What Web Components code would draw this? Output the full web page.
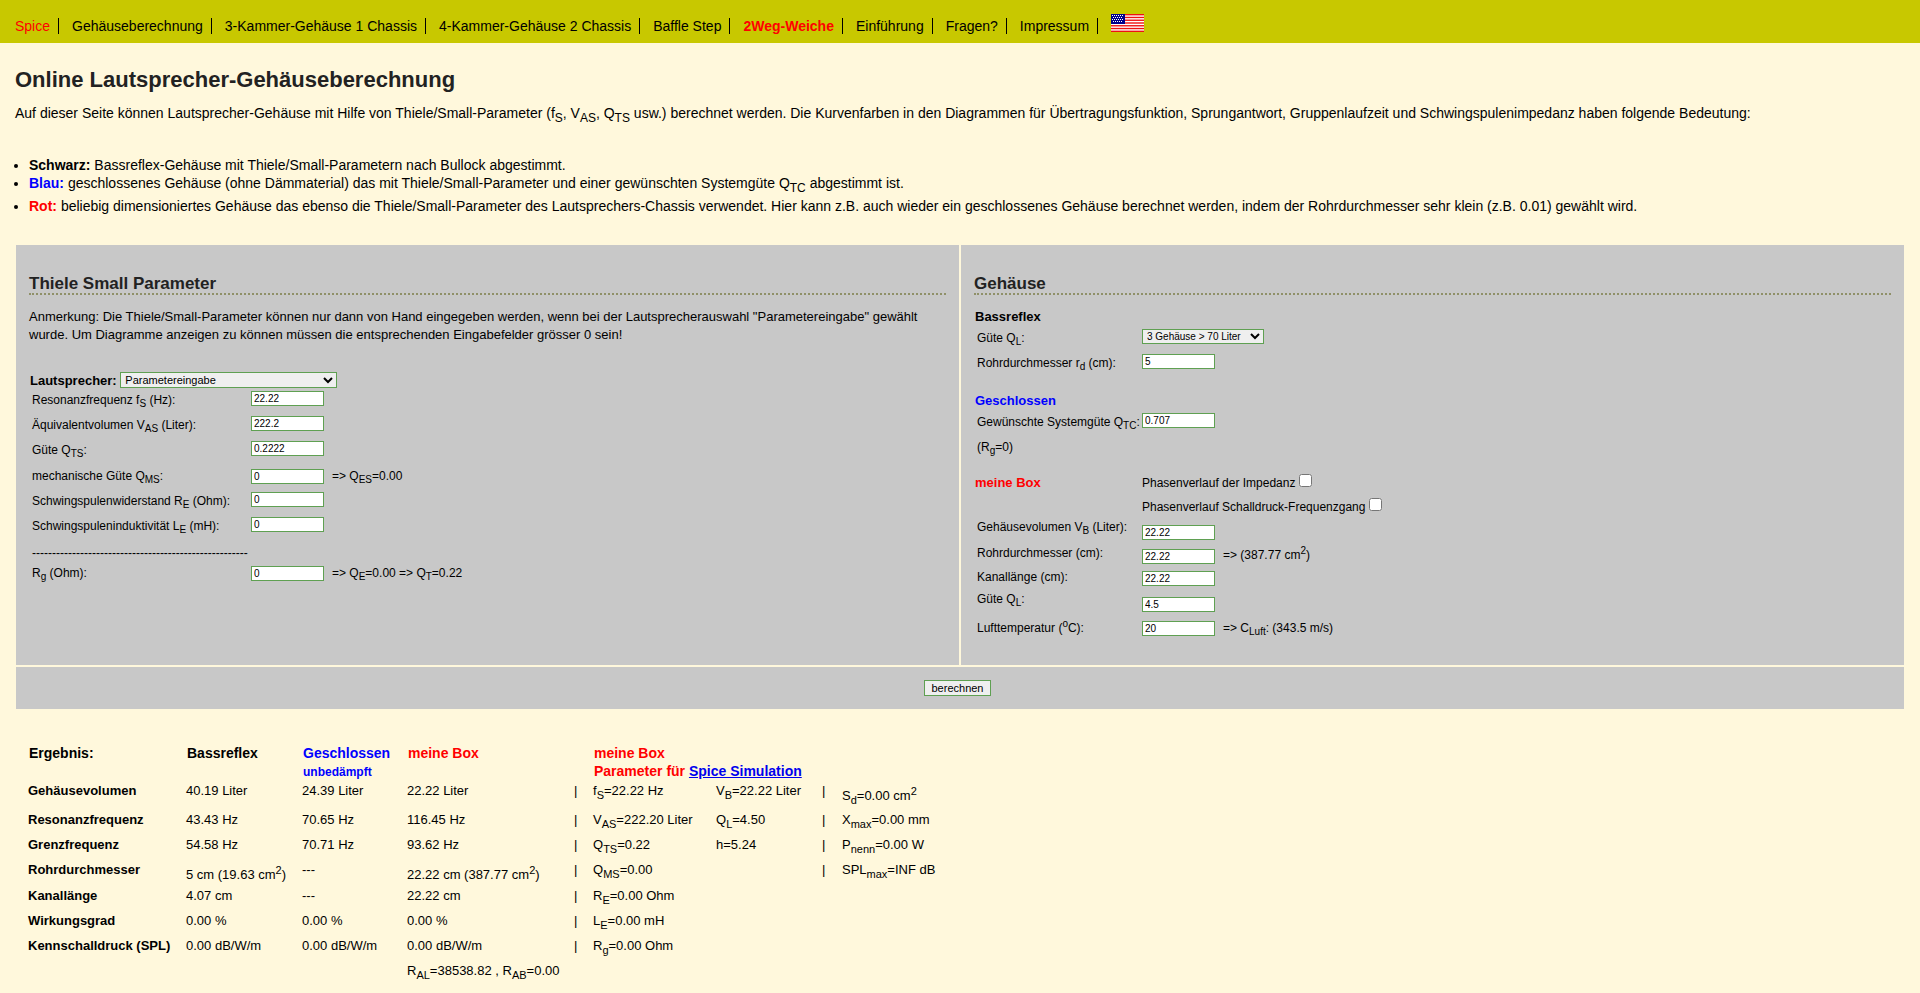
<!DOCTYPE html>
<html lang="de">
<head>
<meta charset="utf-8">
<meta name="viewport" content="width=device-width, initial-scale=1">
<title>Online Lautsprecher-Gehäuseberechnung</title>
<style>
  body {
    margin: 0;
    background: #fff8dc;
    color: #000;
    font: 14px/18px "Liberation Sans", Arial, sans-serif;
  }
</style>
</head>
<body>
<speaker-app></speaker-app>

<script>
const sheet = (css) => `<style>:host { display: block; } ${css}</style>`;

function define(name, html, setup) {
  customElements.define(name, class extends HTMLElement {
    connectedCallback() {
      if (this.shadowRoot) return;
      const template = document.createElement('template');
      template.innerHTML = html;
      this.attachShadow({ mode: 'open' }).append(template.content.cloneNode(true));
      if (setup) setup(this, this.shadowRoot);
    }
  });
}

/* Flag that switches to the English version */
define('us-flag', sheet(`
  :host { width: 33px; height: 18px; }
  svg { display: block; }
`) + `
  <svg width="33" height="18" viewBox="0 0 33 18" role="img" aria-label="English">
    <rect width="33" height="18" fill="#fff"/>
    <g fill="#ee1111"></g>
    <rect width="14" height="10" fill="#00008b"/>
    <g class="stars" fill="#fff"></g>
  </svg>
`, (host, root) => {
  const ns = 'http://www.w3.org/2000/svg';
  const [stripes, stars] = root.querySelectorAll('g');
  const add = (g, x, y, w, h) => {
    const r = document.createElementNS(ns, 'rect');
    r.setAttribute('x', x); r.setAttribute('y', y);
    r.setAttribute('width', w); r.setAttribute('height', h);
    g.append(r);
  };
  for (let i = 0; i < 7; i++) add(stripes, 0, i * 36 / 13, 33, 18 / 13);
  for (let row = 0; row < 4; row++)
    for (let col = 0; col < 6 - row % 2; col++)
      add(stars, 1 + col * 2 + (row % 2), 1 + row * 2, 1, 1);
});

/* One entry of the navigation bar */
define('nav-item', sheet(`
  :host { padding-right: 8px; border-right: 1px solid #000; line-height: 16px; white-space: nowrap; }
  a { color: inherit; text-decoration: none; }
  :host([hot]) { color: #f00; }
  :host([strong]) { font-weight: bold; }
`) + `<a href="#"><slot></slot></a>`);

define('nav-bar', sheet(`
  :host { background: #c8c800; }
  nav { display: flex; flex-wrap: wrap; align-items: flex-end; gap: 13px; min-height: 34px; padding: 0 15px 9px; }
  .flag { display: block; margin-bottom: 2px; }
`) + `
  <nav aria-label="Hauptmenü">
    <nav-item hot>Spice</nav-item>
    <nav-item>Gehäuseberechnung</nav-item>
    <nav-item>3-Kammer-Gehäuse 1 Chassis</nav-item>
    <nav-item>4-Kammer-Gehäuse 2 Chassis</nav-item>
    <nav-item>Baffle Step</nav-item>
    <nav-item hot strong>2Weg-Weiche</nav-item>
    <nav-item>Einführung</nav-item>
    <nav-item>Fragen?</nav-item>
    <nav-item>Impressum</nav-item>
    <a class="flag" href="#"><us-flag></us-flag></a>
  </nav>
`);

define('page-intro', sheet(`
  :host { padding: 0 15px; }
  h1 { margin: 0 0 11px; font-size: 22px; line-height: 26px; color: #222; }
  p { margin: 0 0 29px; }
  ul { margin: 0; padding-left: 14px; }
  sub { font-size: 12px; }
  .blue { color: #00f; }
  .red { color: #f00; }
`) + `
  <h1>Online Lautsprecher-Gehäuseberechnung</h1>
  <p>Auf dieser Seite können Lautsprecher-Gehäuse mit Hilfe von Thiele/Small-Parameter (f<sub>S</sub>, V<sub>AS</sub>, Q<sub>TS</sub> usw.) berechnet werden. Die Kurvenfarben in den Diagrammen für Übertragungsfunktion, Sprungantwort, Gruppenlaufzeit und Schwingspulenimpedanz haben folgende Bedeutung:</p>
  <ul>
    <li><b>Schwarz:</b> Bassreflex-Gehäuse mit Thiele/Small-Parametern nach Bullock abgestimmt.</li>
    <li><b class="blue">Blau:</b> geschlossenes Gehäuse (ohne Dämmaterial) das mit Thiele/Small-Parameter und einer gewünschten Systemgüte Q<sub>TC</sub> abgestimmt ist.</li>
    <li><b class="red">Rot:</b> beliebig dimensioniertes Gehäuse das ebenso die Thiele/Small-Parameter des Lautsprechers-Chassis verwendet. Hier kann z.B. auch wieder ein geschlossenes Gehäuse berechnet werden, indem der Rohrdurchmesser sehr klein (z.B. 0.01) gewählt wird.</li>
  </ul>
`);

const controlCss = `
  input[type=text], select, button {
    box-sizing: border-box; margin: 0; border: 1px solid #5fa052; border-radius: 0;
    font-family: inherit; color: #000;
  }
  input[type=text] { width: 73px; height: 15px; padding: 0 2px; font-size: 10px; background: #fff; }
  select { height: 15px; padding: 0; background: #efefef; font-size: 10px; }
`;

/* Label, control and an optional note; options="…" turns the control into a drop-down */
define('field-row', sheet(controlCss + `
  :host { font-size: 12px; }
  div { display: grid; grid-template-columns: var(--label-width) max-content 1fr; column-gap: 8px; align-items: start; height: 100%; }
  label { white-space: nowrap; margin-right: -8px; }
  :host([base]) div { align-items: baseline; align-content: start; }
  :host([low]) div { align-items: end; }
  :host([low]) label { align-self: start; }
  :host([last]) div { align-items: baseline; align-content: start; }
  :host([last]) label { padding-top: 3px; }
  select { width: 122px; }
`) + `
  <div><label for="field"><slot></slot></label><slot name="note"></slot></div>
`, (host, root) => {
  const options = host.getAttribute('options');
  const control = document.createElement(options ? 'select' : 'input');
  control.id = 'field';
  if (options) control.add(new Option(options));
  else { control.type = 'text'; control.value = host.getAttribute('value'); }
  root.querySelector('label').after(control);
});

define('check-row', sheet(`
  :host { height: 24px; font-size: 12px; }
  input { margin: 0 0 0 4px; width: 13px; height: 13px; vertical-align: baseline; }
`) + `<label><slot></slot><input type="checkbox"></label>`);

define('form-panel', sheet(`
  :host { background: #c8c8c8; padding: 30px 13px 33px; font-size: 13px; }
  h2 { margin: 0 0 13px; border-bottom: 2px dotted #8f9068; font-size: 17px; line-height: 18px; color: #222; }
`) + `<h2></h2><slot></slot>`, (host, root) => {
  root.querySelector('h2').textContent = host.getAttribute('heading');
});

define('calc-form', sheet(controlCss + `
  :host { padding: 0 16px; }
  form { display: grid; grid-template-columns: 1fr 1fr; gap: 2px; }
  sub, sup { font-size: 10px; line-height: 0; }
  p { margin: 0; }
  .hint { margin-bottom: 28px; }
  .pick { padding-left: 1px; font-weight: bold; }
  .pick select { width: 217px; height: 16px; font-size: 11px; vertical-align: top; }
  .rows { display: grid; padding-left: 3px; font-size: 12px; }
  .driver { --label-width: 211px; grid-template-rows: 25px 25px 26px 25px 25px 27px 20px; margin-top: 1px; }
  .case { --label-width: 157px; grid-auto-rows: 25px; }
  .own { --label-width: 157px; grid-template-rows: 22px 20px 18px 22px 16px; row-gap: 4px; }
  h3 { margin: 0 0 3px 1px; font-size: 13px; line-height: 18px; }
  .blue { color: #00f; margin-top: 13px; }
  .red { color: #f00; }
  .phase { display: grid; grid-template-columns: 167px 1fr; align-items: start; margin: 11px 0 -4px; padding-left: 1px; }
  .phase h3 { margin: 0; }
  .actions { grid-column: 1 / -1; padding: 13px 5px 13px 0; background: #c8c8c8; text-align: center; line-height: 0; }
  button { height: 16px; width: 67px; padding: 0; font-size: 11px; line-height: 14px; background: #efefef; }
`) + `
  <form>
    <form-panel heading="Thiele Small Parameter">
      <p class="hint">Anmerkung: Die Thiele/Small-Parameter können nur dann von Hand eingegeben werden, wenn bei der Lautsprecherauswahl "Parametereingabe" gewählt wurde. Um Diagramme anzeigen zu können müssen die entsprechenden Eingabefelder grösser 0 sein!</p>
      <p class="pick"><label for="driver">Lautsprecher:</label> <select id="driver"><option>Parametereingabe</option></select></p>
      <div class="rows driver">
        <field-row value="22.22">Resonanzfrequenz f<sub>S</sub> (Hz):</field-row>
        <field-row value="222.2">Äquivalentvolumen V<sub>AS</sub> (Liter):</field-row>
        <field-row value="0.2222">Güte Q<sub>TS</sub>:</field-row>
        <field-row base value="0">mechanische Güte Q<sub>MS</sub>:<span slot="note">=&gt; Q<sub>ES</sub>=0.00</span></field-row>
        <field-row value="0">Schwingspulenwiderstand R<sub>E</sub> (Ohm):</field-row>
        <field-row value="0">Schwingspuleninduktivität L<sub>E</sub> (mH):</field-row>
        <span>------------------------------------------------------</span>
        <field-row base value="0">R<sub>g</sub> (Ohm):<span slot="note">=&gt; Q<sub>E</sub>=0.00 =&gt; Q<sub>T</sub>=0.22</span></field-row>
      </div>
    </form-panel>
    <form-panel heading="Gehäuse">
      <h3>Bassreflex</h3>
      <div class="rows case">
        <field-row options="3 Gehäuse &gt; 70 Liter">Güte Q<sub>L</sub>:</field-row>
        <field-row value="5">Rohrdurchmesser r<sub>d</sub> (cm):</field-row>
      </div>
      <h3 class="blue">Geschlossen</h3>
      <div class="rows case">
        <field-row value="0.707">Gewünschte Systemgüte Q<sub>TC</sub>:</field-row>
        <span>(R<sub>g</sub>=0)</span>
      </div>
      <div class="phase">
        <h3 class="red">meine Box</h3>
        <div>
          <check-row>Phasenverlauf der Impedanz</check-row>
          <check-row>Phasenverlauf Schalldruck-Frequenzgang</check-row>
        </div>
      </div>
      <div class="rows own">
        <field-row low value="22.22">Gehäusevolumen V<sub>B</sub> (Liter):</field-row>
        <field-row low value="22.22">Rohrdurchmesser (cm):<span slot="note">=&gt; (387.77 cm<sup>2</sup>)</span></field-row>
        <field-row low value="22.22">Kanallänge (cm):</field-row>
        <field-row low value="4.5">Güte Q<sub>L</sub>:</field-row>
        <field-row last value="20">Lufttemperatur (<sup>o</sup>C):<span slot="note">=&gt; C<sub>Luft</sub>: (343.5 m/s)</span></field-row>
      </div>
    </form-panel>
    <div class="actions"><button type="button">berechnen</button></div>
  </form>
`);

define('result-table', sheet(`
  :host { padding: 0 28px; font-size: 13px; }
  table { table-layout: fixed; border-collapse: collapse; width: 942px; }
  th, td { padding: 0; text-align: left; vertical-align: top; white-space: nowrap; }
  thead th { height: 38px; padding-left: 1px; font-size: 14px; }
  tbody tr { height: 25px; }
  tbody tr:first-child { height: 29px; }
  tbody tr:nth-child(4) { height: 26px; }
  small { font-size: 12px; }
  sub, sup { font-size: 11px; }
  sub { line-height: 0; }
  .blue { color: #00f; }
  .red { color: #f00; }
  a { color: #00e; }
`) + `
  <table>
    <colgroup>
      <col style="width:158px"><col style="width:116px"><col style="width:105px"><col style="width:167px"><col style="width:19px">
      <col style="width:123px"><col style="width:106px"><col style="width:20px"><col style="width:128px">
    </colgroup>
    <thead>
      <tr>
        <th>Ergebnis:</th><th>Bassreflex</th><th class="blue">Geschlossen<br><small>unbedämpft</small></th><th class="red">meine Box</th><th></th>
        <th class="red" colspan="4">meine Box<br>Parameter für <a href="#">Spice Simulation</a></th>
      </tr>
    </thead>
    <tbody>
      <tr><th>Gehäusevolumen</th><td>40.19 Liter</td><td>24.39 Liter</td><td>22.22 Liter</td><td>|</td><td>f<sub>S</sub>=22.22 Hz</td><td>V<sub>B</sub>=22.22 Liter</td><td>|</td><td>S<sub>d</sub>=0.00 cm<sup>2</sup></td></tr>
      <tr><th>Resonanzfrequenz</th><td>43.43 Hz</td><td>70.65 Hz</td><td>116.45 Hz</td><td>|</td><td>V<sub>AS</sub>=222.20 Liter</td><td>Q<sub>L</sub>=4.50</td><td>|</td><td>X<sub>max</sub>=0.00 mm</td></tr>
      <tr><th>Grenzfrequenz</th><td>54.58 Hz</td><td>70.71 Hz</td><td>93.62 Hz</td><td>|</td><td>Q<sub>TS</sub>=0.22</td><td>h=5.24</td><td>|</td><td>P<sub>nenn</sub>=0.00 W</td></tr>
      <tr><th>Rohrdurchmesser</th><td>5 cm (19.63 cm<sup>2</sup>)</td><td>---</td><td>22.22 cm (387.77 cm<sup>2</sup>)</td><td>|</td><td>Q<sub>MS</sub>=0.00</td><td></td><td>|</td><td>SPL<sub>max</sub>=INF dB</td></tr>
      <tr><th>Kanallänge</th><td>4.07 cm</td><td>---</td><td>22.22 cm</td><td>|</td><td>R<sub>E</sub>=0.00 Ohm</td><td></td><td></td><td></td></tr>
      <tr><th>Wirkungsgrad</th><td>0.00 %</td><td>0.00 %</td><td>0.00 %</td><td>|</td><td>L<sub>E</sub>=0.00 mH</td><td></td><td></td><td></td></tr>
      <tr><th>Kennschalldruck (SPL)</th><td>0.00 dB/W/m</td><td>0.00 dB/W/m</td><td>0.00 dB/W/m</td><td>|</td><td>R<sub>g</sub>=0.00 Ohm</td><td></td><td></td><td></td></tr>
      <tr><th></th><td></td><td></td><td>R<sub>AL</sub>=38538.82 , R<sub>AB</sub>=0.00</td><td></td><td></td><td></td><td></td><td></td></tr>
    </tbody>
  </table>
`);

define('speaker-app', sheet(`
  page-intro { margin-top: 24px; }
  calc-form { margin-top: 30px; }
  result-table { margin-top: 35px; }
`) + `
  <nav-bar></nav-bar>
  <main>
    <page-intro></page-intro>
    <calc-form></calc-form>
    <result-table></result-table>
  </main>
`);
</script>
</body>
</html>
